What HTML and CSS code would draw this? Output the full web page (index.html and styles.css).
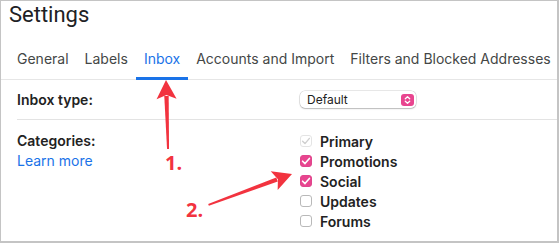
FILE: index.html
```html
<!DOCTYPE html>
<html lang="en">
<head>
  <meta charset="UTF-8" />
  <title>Settings - Inbox</title>
  <link rel="stylesheet" href="styles.css">
</head>
<body>
  <div class="frame">
    <h1 class="title">Settings</h1>

    <nav class="tabs">
      <a class="tab">General</a>
      <a class="tab">Labels</a>
      <a class="tab active">Inbox</a>
      <a class="tab">Accounts and Import</a>
      <a class="tab">Filters and Blocked Addresses</a>
    </nav>

    <div class="row row-type">
      <div class="label">Inbox type:</div>
      <div class="control">
        <div class="select">
          <span>Default</span>
          <span class="stepper">
            <svg width="13" height="12" viewBox="0 0 13 12">
              <path d="M4.3 4.8 L6.5 2.8 L8.7 4.8" fill="none" stroke="#fff" stroke-width="1.3" stroke-linecap="round" stroke-linejoin="round"/>
              <path d="M4.3 7.2 L6.5 9.2 L8.7 7.2" fill="none" stroke="#fff" stroke-width="1.3" stroke-linecap="round" stroke-linejoin="round"/>
            </svg>
          </span>
        </div>
      </div>
    </div>

    <div class="row row-cats">
      <div class="label">
        Categories:
        <a class="learn">Learn more</a>
      </div>
      <div class="control checks">
        <label class="check"><span class="box disabled"><svg width="12" height="12" viewBox="0 0 12 12"><path d="M2.6 6.2 L5 8.6 L9.4 3.4" fill="none" stroke="#cfcfcf" stroke-width="1.4" stroke-linecap="round" stroke-linejoin="round"/></svg></span>Primary</label>
        <label class="check"><span class="box on"><svg width="12" height="12" viewBox="0 0 12 12"><path d="M2.6 6.2 L5 8.6 L9.4 3.4" fill="none" stroke="#fff" stroke-width="1.6" stroke-linecap="round" stroke-linejoin="round"/></svg></span>Promotions</label>
        <label class="check"><span class="box on"><svg width="12" height="12" viewBox="0 0 12 12"><path d="M2.6 6.2 L5 8.6 L9.4 3.4" fill="none" stroke="#fff" stroke-width="1.6" stroke-linecap="round" stroke-linejoin="round"/></svg></span>Social</label>
        <label class="check"><span class="box"></span>Updates</label>
        <label class="check"><span class="box"></span>Forums</label>
      </div>
    </div>

    <!-- annotation arrows drawn over the screenshot -->
    <svg class="marks" width="559" height="243" viewBox="0 0 559 243">
      <g transform="translate(166 80) rotate(-91.7)" fill="#f2333f">
        <polygon points="0,0 -19,-10 -15,0 -19,10"/>
        <path d="M-16,-2.2 L-69,-1 L-69,1 L-16,2.2 Z"/>
      </g>
      <g transform="translate(292 174) rotate(-20.3)" fill="#f2333f">
        <polygon points="0,0 -19,-10 -15,0 -19,10"/>
        <path d="M-16,-2.2 L-89,-1 L-89,1 L-16,2.2 Z"/>
      </g>
      <text class="num" x="165" y="170">1.</text>
      <text class="num" x="186" y="217">2.</text>
    </svg>
  </div>
</body>
</html>
```

FILE: styles.css
```css
body {
  margin: 0;
  font-family: Inter, Roboto, "Liberation Sans", sans-serif;
  background: #fff;
}

.frame {
  position: relative;
  width: 559px;
  height: 243px;
  box-sizing: border-box;
  border: 1px solid #c4c4c4;
  border-right-width: 2px;
  border-bottom-width: 2px;
  overflow: hidden;
}

.title {
  margin: 0;
  padding: 1px 0 0 8px;
  font-family: Roboto, sans-serif;
  font-size: 22px;
  font-weight: 400;
  line-height: 26px;
  color: #202124;
}

.tabs {
  display: flex;
  margin-top: 16px;
  padding-left: 8px;
  border-bottom: 1px solid #e6e6e6;
}

.tab {
  padding: 6px 8px 9px;
  font-size: 14px;
  line-height: 18px;
  color: #444746;
  border-bottom: 3px solid transparent;
  margin-bottom: -1px;
  white-space: nowrap;
}

.tab.active {
  color: #1a73e8;
  border-bottom-color: #1a73e8;
}

.row {
  display: grid;
  grid-template-columns: 283px 1fr;
  margin-left: 16px;
}

.label {
  font-size: 14px;
  font-weight: 600;
  color: #222;
  line-height: 20px;
}

.row-type {
  align-items: center;
  height: 39px;
  border-bottom: 1px solid #e3e3e3;
}

.row-type .label {
  padding-top: 1px;
}

.select {
  display: flex;
  justify-content: space-between;
  align-items: center;
  width: 116px;
  height: 17px;
  box-sizing: border-box;
  padding: 0 2px 0 7px;
  border-radius: 5px;
  background: #fff;
  box-shadow: 0 0 0 0.5px rgba(0, 0, 0, 0.18), 0 1px 1.5px rgba(0, 0, 0, 0.2);
  font-size: 12px;
  color: #222;
}

.stepper {
  display: flex;
  width: 13px;
  height: 12px;
  border-radius: 3px;
  background: #e8458f;
}

.row-cats {
  padding-top: 11px;
}

.learn {
  display: block;
  font-weight: normal;
  color: #1a73e8;
}

.checks {
  display: flex;
  flex-direction: column;
}

.check {
  display: flex;
  align-items: center;
  gap: 8px;
  height: 20px;
  font-size: 14px;
  font-weight: 600;
  color: #222;
}

.box {
  display: flex;
  width: 12px;
  height: 12px;
  box-sizing: border-box;
  border: 1px solid #b9b9b9;
  border-radius: 3px;
  background: #fff;
}

.box svg {
  margin: -1px;
}

.box.disabled {
  border-color: #e4e4e4;
}

.box.on {
  border-color: #e0468c;
  background: #e8458f;
}

.marks {
  position: absolute;
  left: -1px;
  top: -1px;
  pointer-events: none;
}

.num {
  font-family: "Open Sans", sans-serif;
  font-size: 20px;
  font-weight: bold;
  fill: #f2333f;
  stroke: #fff;
  stroke-width: 3px;
  paint-order: stroke;
}
```
